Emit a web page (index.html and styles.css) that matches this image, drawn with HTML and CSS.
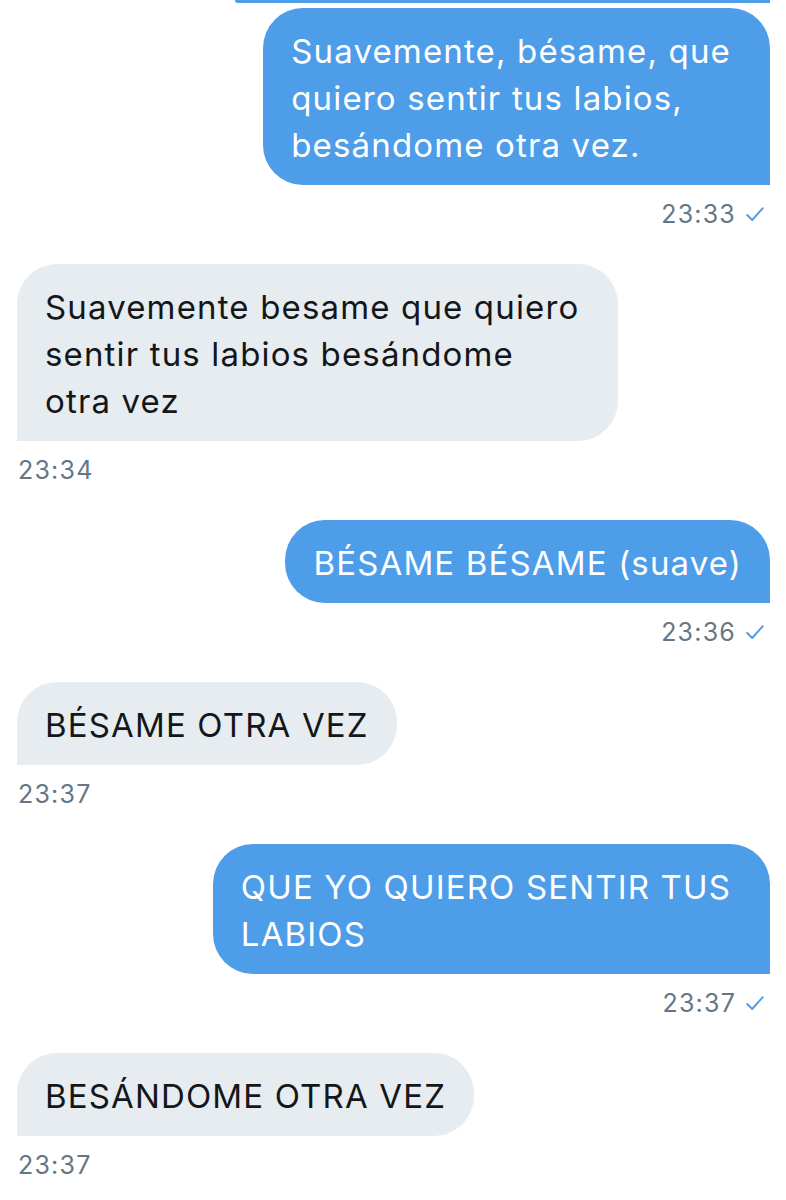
FILE: index.html
```html
<!DOCTYPE html>
<html lang="es">
<head>
<meta charset="utf-8">
<title>Mensajes</title>
<link rel="stylesheet" href="styles.css">
</head>
<body>
<div class="thread">
  <div class="prev-tail"></div>

  <div class="msg sent">
    <div class="bubble multi">Suavemente, bésame, que<br>quiero sentir tus labios,<br>besándome otra vez.</div>
    <div class="meta"><span class="time">23:33</span><svg class="check" viewBox="0 0 18 15" width="18" height="15"><path d="M1.2 8 L6.2 13 L16.8 1.2"/></svg></div>
  </div>

  <div class="msg recv">
    <div class="bubble multi">Suavemente besame que quiero<br>sentir tus labios besándome<br>otra vez</div>
    <div class="meta"><span class="time">23:34</span></div>
  </div>

  <div class="msg sent">
    <div class="bubble">BÉSAME BÉSAME (suave)</div>
    <div class="meta"><span class="time">23:36</span><svg class="check" viewBox="0 0 18 15" width="18" height="15"><path d="M1.2 8 L6.2 13 L16.8 1.2"/></svg></div>
  </div>

  <div class="msg recv">
    <div class="bubble">BÉSAME OTRA VEZ</div>
    <div class="meta"><span class="time">23:37</span></div>
  </div>

  <div class="msg sent">
    <div class="bubble multi">QUE YO QUIERO SENTIR TUS<br>LABIOS</div>
    <div class="meta"><span class="time">23:37</span><svg class="check" viewBox="0 0 18 15" width="18" height="15"><path d="M1.2 8 L6.2 13 L16.8 1.2"/></svg></div>
  </div>

  <div class="msg recv">
    <div class="bubble">BESÁNDOME OTRA VEZ</div>
    <div class="meta"><span class="time">23:37</span></div>
  </div>
</div>
</body>
</html>
```

FILE: styles.css
```css
html, body {
  margin: 0;
  padding: 0;
  background: #ffffff;
}

body {
  font-family: Inter, "Liberation Sans", Arial, sans-serif;
  -webkit-font-smoothing: antialiased;
}

.thread {
  display: flex;
  flex-direction: column;
  padding: 0 16px 0 17px;
}

.prev-tail {
  align-self: flex-end;
  width: 535px;
  height: 3px;
  background: #4d9de9;
  border-bottom-left-radius: 3px;
  margin-bottom: 5px;
}

.msg {
  display: flex;
  flex-direction: column;
  margin-bottom: 35px;
}

.msg.sent {
  align-items: flex-end;
}

.msg.recv {
  align-items: flex-start;
}

.bubble {
  font-size: 33px;
  line-height: 47px;
  letter-spacing: 1.15px;
  padding: 20px 28px 16px 28px;
  border-radius: 40px;
  white-space: nowrap;
}

.bubble.multi {
  padding-right: 39px;
}

.sent .bubble {
  background: #4d9de9;
  color: #ffffff;
  border-bottom-right-radius: 0;
}

.recv .bubble {
  background: #e6ecf0;
  color: #14171a;
  border-bottom-left-radius: 0;
}

.meta {
  display: flex;
  align-items: center;
  gap: 10px;
  margin-top: 14px;
  height: 30px;
  font-size: 25px;
  line-height: 30px;
  letter-spacing: 1.2px;
  color: #657786;
}

.sent .meta {
  padding-right: 6px;
}

.recv .meta {
  padding-left: 1px;
}

.check {
  display: block;
  fill: none;
  stroke: #4d9de9;
  stroke-width: 1.9;
  stroke-linecap: round;
  stroke-linejoin: round;
}
```
